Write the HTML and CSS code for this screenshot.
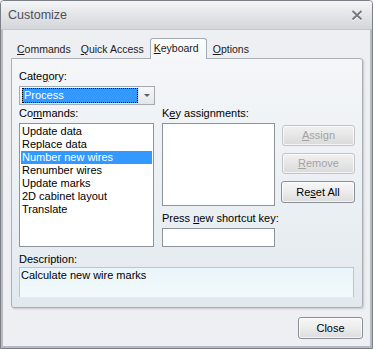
FILE: index.html
```html
<!DOCTYPE html>
<html lang="en">
<head>
    <meta charset="UTF-8">
    <title>Customize</title>
    <link rel="stylesheet" href="styles.css">
</head>
<body>
    <div id="window">
        <div id="titlebar">
            <span id="title">Customize</span>
            <svg id="closeX" width="12" height="11" viewBox="0 0 12 11">
                <path d="M1.5 2 L10.5 10.5 M10.5 2 L1.5 10.5" stroke="#ffffff" stroke-width="2" fill="none"/>
                <path d="M1.5 1 L10.5 9.5 M10.5 1 L1.5 9.5" stroke="#767b81" stroke-width="2" fill="none"/>
            </svg>
        </div>
        <div id="frame">
            <div id="tabs">
                <span class="tab"><u>C</u>ommands</span>
                <span class="tab"><u>Q</u>uick Access</span>
                <span class="tab active"><u>K</u>eyboard</span>
                <span class="tab"><u>O</u>ptions</span>
            </div>
            <div id="panel">
                <div class="label">Cate<u>g</u>ory:</div>
                <div id="combo">
                    <div id="comboValue"><span>Process</span></div>
                    <div id="comboArrow"><span class="tri"></span></div>
                </div>
                <div id="columns">
                    <div id="leftCol">
                        <div class="label">Co<u>m</u>mands:</div>
                        <div id="cmdList">
                            <div class="item">Update data</div>
                            <div class="item">Replace data</div>
                            <div class="item selected">Number new wires</div>
                            <div class="item">Renumber wires</div>
                            <div class="item">Update marks</div>
                            <div class="item">2D cabinet layout</div>
                            <div class="item">Translate</div>
                        </div>
                    </div>
                    <div id="rightCol">
                        <div class="label">K<u>e</u>y assignments:</div>
                        <div id="keyRow">
                            <div id="keyList"></div>
                            <div id="buttons">
                                <div class="btn disabled"><u>A</u>ssign</div>
                                <div class="btn disabled"><u>R</u>emove</div>
                                <div class="btn reset">Re<u>s</u>et All</div>
                            </div>
                        </div>
                        <div class="label pressLabel">Press <u>n</u>ew shortcut key:</div>
                        <div id="shortcut"></div>
                    </div>
                </div>
                <div class="label descLabel">Description:</div>
                <div id="desc">Calculate new wire marks</div>
            </div>
            <div id="footer">
                <div class="btn close">Close</div>
            </div>
        </div>
    </div>
</body>
</html>
```
FILE: styles.css
```css
body {
    margin: 0;
    padding: 0;
    font-family: "Liberation Sans", Arial, sans-serif;
    font-size: 11px;
    color: #000;
    background-color: #eeeff3;
}
u {
    text-decoration: underline;
    text-underline-offset: 1px;
}
#window {
    width: 373px;
    height: 349px;
    box-sizing: border-box;
    border: 1px solid #7c8086;
    border-radius: 4px 4px 0 0;
    overflow: hidden;
    display: flex;
    flex-direction: column;
}
#titlebar {
    height: 28px;
    flex-shrink: 0;
    display: flex;
    align-items: center;
    justify-content: space-between;
    padding: 0 9px 0 7px;
    background: linear-gradient(#f4f5f6, #e4e6e9 45%, #d3d6da);
    border-bottom: 1px solid #c4c7cb;
}
#title {
    font-size: 12.5px;
    color: #4d5055;
}
#closeX {
    margin-top: 1px;
}
#frame {
    flex: 1;
    border: 2px solid #b7bbc0;
    border-top: none;
    background-color: #eeeff3;
    padding: 0 7px 0 8px;
    display: flex;
    flex-direction: column;
}
#tabs {
    margin-top: 8px;
    height: 20px;
    display: flex;
    align-items: flex-end;
    position: relative;
    z-index: 1;
    font-size: 10.5px;
}
.tab {
    height: 19px;
    line-height: 20px;
    padding: 0 5px;
    color: #1b1b1b;
}
.tab:first-child {
    padding-left: 6px;
}
.tab.active {
    height: 20px;
    line-height: 19px;
    padding: 0 7px 0 3px;
    margin: 0 1px 0 1px;
    border: 1px solid #a4abb3;
    border-bottom: none;
    border-radius: 3px 3px 0 0;
    background: linear-gradient(#fbfcfd, #f4f6f8);
    margin-bottom: -1px;
}
#panel {
    height: 250px;
    box-sizing: border-box;
    border: 1px solid #a9b0b8;
    border-radius: 0 3px 3px 3px;
    box-shadow: 1px 1px 2px rgba(0, 0, 0, 0.18);
    background: linear-gradient(#f4f6f8, #eaeff3 60%, #e2e9ee);
    padding: 11px 7px 0 7px;
}
.label {
    height: 13px;
    line-height: 13px;
}
#combo {
    margin-top: 3px;
    width: 136px;
    height: 19px;
    box-sizing: border-box;
    border: 1px solid #a5aab0;
    display: flex;
    background: linear-gradient(#f6f7f8, #e3e6e9);
}
#comboValue {
    width: 116px;
    padding: 1px 0 1px 2px;
}
#comboValue span {
    display: block;
    height: 15px;
    line-height: 13px;
    box-sizing: border-box;
    background-color: #3399ff;
    color: #fff;
    padding-left: 1px;
    border: 1px dotted #000;
}
#comboArrow {
    flex: 1;
    border-left: 1px solid #dfe2e5;
    display: flex;
    align-items: center;
    justify-content: center;
}
.tri {
    width: 0;
    height: 0;
    border-left: 3px solid transparent;
    border-right: 3px solid transparent;
    border-top: 3px solid #5a5e63;
}
#columns {
    margin-top: 2px;
    display: flex;
    gap: 8px;
}
#leftCol {
    width: 136px;
}
#cmdList {
    margin-top: 3px;
    height: 124px;
    box-sizing: border-box;
    border: 1px solid #8e939a;
    background-color: #fff;
    padding: 1px 1px 0 1px;
}
.item {
    height: 13px;
    line-height: 13px;
    padding-left: 1px;
}
.item.selected {
    background-color: #3399ff;
    color: #fff;
}
#keyRow {
    margin-top: 3px;
    display: flex;
    gap: 7px;
}
#keyList {
    width: 113px;
    height: 83px;
    box-sizing: border-box;
    border: 1px solid #8e939a;
    background-color: #fff;
}
#buttons {
    width: 73px;
    padding-top: 2px;
    display: flex;
    flex-direction: column;
    gap: 7px;
}
.btn {
    height: 21px;
    line-height: 19px;
    box-sizing: border-box;
    border: 1px solid #8b8f95;
    border-radius: 3px;
    text-align: center;
    background: linear-gradient(#f7f7f7, #ececec 50%, #dcdcdc);
    box-shadow: inset 0 0 0 1px rgba(255, 255, 255, 0.7);
}
.btn.disabled {
    color: #a3a3a3;
    border-color: #c2c4c7;
    background: linear-gradient(#f1f1f1, #e6e6e6 50%, #dadada);
}
.btn.reset {
    height: 22px;
    line-height: 20px;
    margin-left: -1px;
}
.pressLabel {
    margin-top: 6px;
}
#shortcut {
    margin-top: 3px;
    width: 113px;
    height: 19px;
    box-sizing: border-box;
    border: 1px solid #8e939a;
    background-color: #fff;
}
.descLabel {
    margin-top: 6px;
}
#desc {
    margin-top: 1px;
    width: 335px;
    height: 30px;
    box-sizing: border-box;
    border: 1px solid #bcc6ce;
    border-bottom: none;
    background: linear-gradient(#eaf5f9, #f1f9fb);
    padding-left: 1px;
    line-height: 15px;
}
#footer {
    display: flex;
    justify-content: flex-end;
    margin-top: 9px;
}
.btn.close {
    width: 65px;
    height: 22px;
    line-height: 20px;
}
```
